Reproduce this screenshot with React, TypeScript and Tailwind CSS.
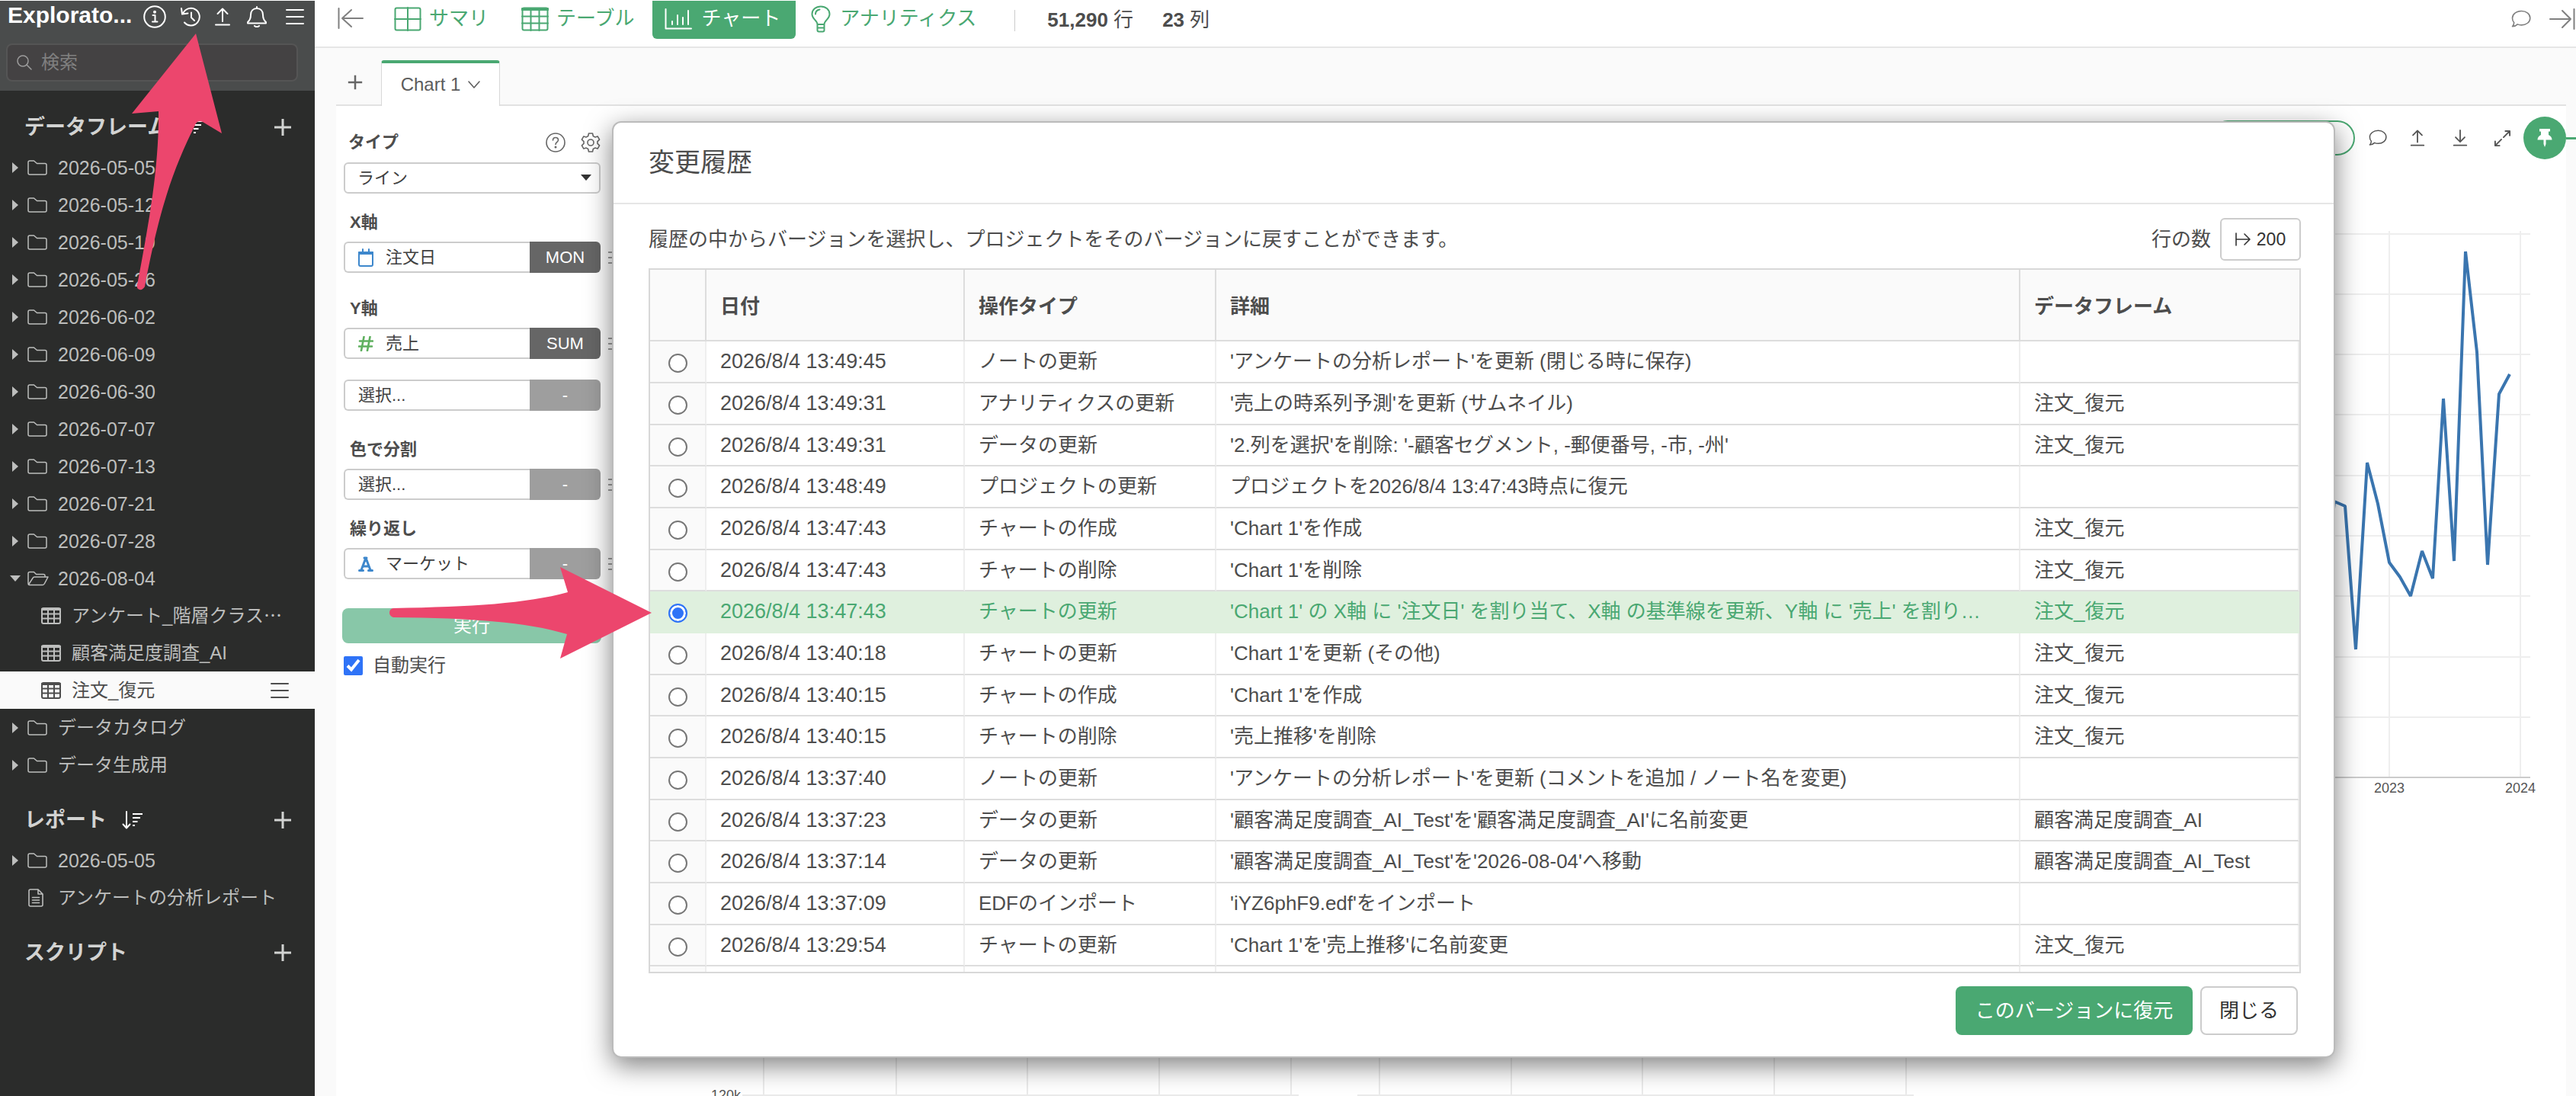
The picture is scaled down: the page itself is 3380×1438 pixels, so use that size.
import { useState, type ReactNode } from "react";

interface HistoryRow {
  date: string;
  type: string;
  detail: string;
  frame: string;
}

const history: HistoryRow[] = [
  { date: "2026/8/4 13:49:45", type: "ノートの更新", detail: "'アンケートの分析レポート'を更新 (閉じる時に保存)", frame: "" },
  { date: "2026/8/4 13:49:31", type: "アナリティクスの更新", detail: "'売上の時系列予測'を更新 (サムネイル)", frame: "注文_復元" },
  { date: "2026/8/4 13:49:31", type: "データの更新", detail: "'2.列を選択'を削除: '-顧客セグメント, -郵便番号, -市, -州'", frame: "注文_復元" },
  { date: "2026/8/4 13:48:49", type: "プロジェクトの更新", detail: "プロジェクトを2026/8/4 13:47:43時点に復元", frame: "" },
  { date: "2026/8/4 13:47:43", type: "チャートの作成", detail: "'Chart 1'を作成", frame: "注文_復元" },
  { date: "2026/8/4 13:47:43", type: "チャートの削除", detail: "'Chart 1'を削除", frame: "注文_復元" },
  { date: "2026/8/4 13:47:43", type: "チャートの更新", detail: "'Chart 1' の X軸 に '注文日' を割り当て、X軸 の基準線を更新、Y軸 に '売上' を割り…", frame: "注文_復元" },
  { date: "2026/8/4 13:40:18", type: "チャートの更新", detail: "'Chart 1'を更新 (その他)", frame: "注文_復元" },
  { date: "2026/8/4 13:40:15", type: "チャートの作成", detail: "'Chart 1'を作成", frame: "注文_復元" },
  { date: "2026/8/4 13:40:15", type: "チャートの削除", detail: "'売上推移'を削除", frame: "注文_復元" },
  { date: "2026/8/4 13:37:40", type: "ノートの更新", detail: "'アンケートの分析レポート'を更新 (コメントを追加 / ノート名を変更)", frame: "" },
  { date: "2026/8/4 13:37:23", type: "データの更新", detail: "'顧客満足度調査_AI_Test'を'顧客満足度調査_AI'に名前変更", frame: "顧客満足度調査_AI" },
  { date: "2026/8/4 13:37:14", type: "データの更新", detail: "'顧客満足度調査_AI_Test'を'2026-08-04'へ移動", frame: "顧客満足度調査_AI_Test" },
  { date: "2026/8/4 13:37:09", type: "EDFのインポート", detail: "'iYZ6phF9.edf'をインポート", frame: "" },
  { date: "2026/8/4 13:29:54", type: "チャートの更新", detail: "'Chart 1'を'売上推移'に名前変更", frame: "注文_復元" },
];

const folders = [
  "2026-05-05",
  "2026-05-12",
  "2026-05-19",
  "2026-05-26",
  "2026-06-02",
  "2026-06-09",
  "2026-06-30",
  "2026-07-07",
  "2026-07-13",
  "2026-07-21",
  "2026-07-28",
];

interface IconProps {
  className?: string;
  box?: string;
  width?: number;
  children: ReactNode;
}

function Icon({ className, box = "0 0 24 24", width = 2, children }: IconProps) {
  return (
    <svg
      className={className}
      viewBox={box}
      fill="none"
      stroke="currentColor"
      strokeWidth={width}
      strokeLinecap="round"
      strokeLinejoin="round"
      aria-hidden="true"
    >
      {children}
    </svg>
  );
}

function GridIcon({ className }: { className?: string }) {
  return (
    <Icon className={className} box="0 0 26 22">
      <rect x="1" y="1" width="24" height="20" rx="2" />
      <path d="M1 2.5h24" strokeWidth="3" />
      <path d="M1 8.5h24M1 14.5h24M9 2v19M17 2v19" />
    </Icon>
  );
}

function CommentIcon({ className }: { className?: string }) {
  return (
    <Icon className={className} box="0 0 26 24" width={1.6}>
      <path d="M13.5 1.5c6.4 0 11.3 4 11.3 9.2s-4.900 9.200-11.300 9.200c-1.900 0-3.700-.3-5.200-1-1.700 1.700-3.900 2.900-6.800 2.900 1.400-1.500 2.100-3.200 2.200-5.200C2 15 1.500 13 1.500 10.700c0-5.200 5.300-9.200 12-9.200z" />
    </Icon>
  );
}

function UploadIcon({ className, width }: { className?: string; width?: number }) {
  return (
    <Icon className={className} box="0 0 20 24" width={width}>
      <path d="M10 18V2M3.500 8 10 1.500 16.500 8M1 22.500h18" />
    </Icon>
  );
}

function MenuIcon({ className }: { className?: string }) {
  return (
    <Icon className={className} box="0 0 24 20">
      <path d="M1 1h22M1 10h22M1 19h22" />
    </Icon>
  );
}

function PlusIcon({ className }: { className?: string }) {
  return (
    <Icon className={className} width={3}>
      <path d="M12 1v22M1 12h22" strokeLinecap="butt" />
    </Icon>
  );
}

function SectionHead({ title, sortable }: { title: string; sortable?: boolean }) {
  return (
    <div className="flex h-[76px] items-center pt-5 pl-8 pr-[30px] text-[#d2d3d2]">
      <h2 className="text-[27px] leading-8 font-bold">{title}</h2>
      {sortable && (
        <button type="button" aria-label="並べ替え" className="ml-5 text-white">
          <Icon className="h-6 w-7" box="0 0 28 24">
            <path d="M6 1v21M1.500 17.500 6 22.500l4.500-5" />
            <path d="M14 4h13M14 9h10M14 14h6.500M14 19h3" strokeLinecap="butt" />
          </Icon>
        </button>
      )}
      <button type="button" aria-label={`${title}を追加`} className="ml-auto">
        <PlusIcon className="size-6" />
      </button>
    </div>
  );
}

function FolderRow({ name, open }: { name: string; open?: boolean }) {
  const dated = name.startsWith("20");
  return (
    <li className="flex h-[49px] items-center text-[#bdbebd]">
      <span className="flex w-9 shrink-0 justify-center pl-1">
        {open ? (
          <svg className="h-2 w-[14px]" viewBox="0 0 14 8" fill="currentColor" aria-hidden="true">
            <path d="M0 0h14L7 8z" />
          </svg>
        ) : (
          <svg className="h-[14px] w-2" viewBox="0 0 8 14" fill="currentColor" aria-hidden="true">
            <path d="M0 0v14l8-7z" />
          </svg>
        )}
      </span>
      <span className="w-10 shrink-0">
        {open ? (
          <Icon className="h-5 w-7" box="0 0 28 20" width={1.500}>
            <path d="M1 16V3.500Q1 1.500 3 1.500h5.500l3 3H21q2 0 2 2V8M1.500 18 7 9.500Q7.500 8 9.500 8H27l-4.500 8.500Q21.500 18.500 20 18.500H2.500Q1 18.500 1 16" />
          </Icon>
        ) : (
          <Icon className="h-5 w-[26px]" box="0 0 26 20" width={1.500}>
            <path d="M1 3q0-2 2-2h5.500l4 3.500H23q2 0 2 2V17q0 2-2 2H3q-2 0-2-2z" />
          </Icon>
        )}
      </span>
      <span className={dated ? "text-[25px] leading-8" : "text-[24px] leading-8"}>{name}</span>
    </li>
  );
}

function FrameRow({ name, active }: { name: string; active?: boolean }) {
  return (
    <li
      className={
        active
          ? "flex h-[49px] items-center bg-[#fafafa] pl-[54px] pr-[34px] text-[#4d4d4d]"
          : "flex h-[49px] items-center pl-[54px] pr-[34px] text-[#bdbebd]"
      }
    >
      <GridIcon className="mr-[14px] h-[22px] w-[26px] shrink-0" />
      <span className="text-[24px] leading-8 whitespace-nowrap">{name}</span>
      {active && (
        <button type="button" aria-label="メニュー" className="ml-auto">
          <MenuIcon className="h-5 w-6" />
        </button>
      )}
    </li>
  );
}

function Sidebar() {
  return (
    <aside className="flex w-[413px] shrink-0 flex-col bg-[#2b2c2b]">
      <div className="h-[118px] bg-[#4a4c4c]">
        <div className="flex h-[42px] items-center pl-2.5 text-white">
          <h1 className="w-[166px] pb-1 text-[30px] leading-9 font-bold">Explorato...</h1>
          <button type="button" aria-label="情報" className="ml-3">
            <Icon className="size-[30px]" box="0 0 30 30">
              <circle cx="15" cy="15" r="13.800" />
              <path d="M12.500 13h3v8M12 21.500h6.500" />
              <circle cx="15" cy="8.800" r="1" fill="currentColor" />
            </Icon>
          </button>
          <button type="button" aria-label="変更履歴" className="ml-[19px]">
            <Icon className="size-[26px]" box="0 0 26 26">
              <path d="M3 9A11.300 11.300 0 1 1 5 20.500M1 2l1 7.500 7.500-1M14 7.500V14l4 4" />
            </Icon>
          </button>
          <button type="button" aria-label="公開" className="ml-[19px]">
            <UploadIcon className="h-6 w-5" />
          </button>
          <button type="button" aria-label="通知" className="ml-[22px]">
            <Icon className="h-7 w-[26px]" box="0 0 26 28">
              <path d="M13 1v2M13 3c5 0 8 3.500 8 8.500 0 5 1.500 7.500 4 9.500v1.500H1V21c2.500-2 4-4.500 4-9.500C5 6.500 8 3 13 3zM10 26q3 2.500 6 0" />
            </Icon>
          </button>
          <button type="button" aria-label="メニュー" className="ml-[25px]">
            <MenuIcon className="h-5 w-6" />
          </button>
        </div>
        <label className="mt-[14px] ml-2 flex h-[50px] w-[383px] items-center gap-3 rounded-lg border-2 border-[#555555] bg-[#444243] px-3 text-[#9c9c9c]">
          <Icon className="size-5 shrink-0" box="0 0 20 20" width={1.500}>
            <circle cx="8" cy="8" r="7" />
            <path d="m13 13 6 6" />
          </Icon>
          <input
            type="search"
            aria-label="検索"
            placeholder="検索"
            className="min-w-0 flex-1 bg-transparent text-[24px] leading-8 outline-none placeholder:text-[#808080]"
          />
        </label>
      </div>

      <SectionHead title="データフレーム" sortable />
      <ul>
        {folders.map((name) => (
          <FolderRow key={name} name={name} />
        ))}
        <FolderRow name="2026-08-04" open />
        <FrameRow name="アンケート_階層クラス⋯" />
        <FrameRow name="顧客満足度調査_AI" />
        <FrameRow name="注文_復元" active />
        <FolderRow name="データカタログ" />
        <FolderRow name="データ生成用" />
      </ul>

      <SectionHead title="レポート" sortable />
      <ul>
        <FolderRow name="2026-05-05" />
        <li className="flex h-[49px] items-center pl-[37px] text-[24px] leading-8 text-[#bdbebd]">
          <Icon className="mr-[19px] h-6 w-5 shrink-0" box="0 0 20 24" width={1.600}>
            <path d="M1 3q0-2 2-2h10l6 6v14q0 2-2 2H3q-2 0-2-2zM13 1v6h6M5.500 11.500h9M5.500 15h9M5.500 18.500h9" />
          </Icon>
          アンケートの分析レポート
        </li>
      </ul>

      <SectionHead title="スクリプト" />
    </aside>
  );
}

function TopBar() {
  return (
    <header className="flex h-[62px] shrink-0 items-start border-b-2 border-[#e6e6e6] bg-white pl-[30px] text-[26px] leading-[46px] text-[#4aa872]">
      <button type="button" aria-label="サイドバーを閉じる" className="mt-[9px] text-[#808080]">
        <Icon className="h-7 w-[34px]" box="0 0 34 28">
          <path d="M1.500 1v26M33 14H6M18 3 6 14l12 11" />
        </Icon>
      </button>
      <nav className="flex items-start">
        <a href="#summary" className="ml-10 flex gap-2.5">
          <Icon className="mt-2 h-8 w-9" box="0 0 36 32">
            <rect x="1.500" y="1.500" width="33" height="29" rx="2" />
            <path d="M1 16h34M18 1v30" />
          </Icon>
          サマリ
        </a>
        <a href="#table" className="ml-[43px] flex gap-2.5">
          <Icon className="mt-2 h-8 w-9" box="0 0 36 32">
            <rect x="1.500" y="1.500" width="33" height="29" rx="2" />
            <path d="M1.500 3h33" strokeWidth="4" />
            <path d="M1 12.500h34M1 21.500h34M12.500 4v27M23.500 4v27" />
          </Icon>
          テーブル
        </a>
        <a href="#chart" className="ml-6 flex h-[50px] gap-3 rounded-b-md bg-[#4aa872] pr-5 pl-4 text-white">
          <Icon className="mt-2.5 h-7 w-9" box="0 0 36 28">
            <path d="M1.500 1v25.500H35M10 21v-4M17 21V9M24 21v-9M31 21V3" />
          </Icon>
          チャート
        </a>
        <a href="#analytics" className="ml-5 flex gap-3">
          <Icon className="mt-1.5 h-9 w-[26px]" box="0 0 26 36">
            <path d="M8.500 25C8.500 20 1.500 18 1.500 11.500 1.500 5.500 6.500 1.500 13 1.500s11.500 4 11.500 10c0 6.500-7 8.500-7 13.500zM8.500 29.500h9M8.500 25v7.500q0 2 2 2h5q2 0 2-2V25" />
            <path d="M6 11.500q0-5 5.500-6" />
          </Icon>
          アナリティクス
        </a>
      </nav>
      <div className="mt-3 ml-[50px] h-7 w-px bg-[#cccccc]" />
      <p className="ml-[42px] pt-0.5 text-[#4d4d4d]">
        <b>51,290</b> 行
      </p>
      <p className="ml-[38px] pt-0.5 text-[#4d4d4d]">
        <b>23</b> 列
      </p>
      <div className="ml-auto flex h-12 items-center gap-6 text-[#808080]">
        <button type="button" aria-label="コメント">
          <CommentIcon className="h-6 w-[26px]" />
        </button>
        <button type="button" aria-label="パネルを開く" className="mr-px">
          <Icon className="h-7 w-[34px]" box="0 0 34 28">
            <path d="M32.500 1v26M1 14h27M17 3l11 11-11 11" />
          </Icon>
        </button>
      </div>
    </header>
  );
}

function TabBar() {
  return (
    <div className="flex h-[76px] shrink-0 items-end bg-[#fafafa] pl-7">
      <div className="flex h-[60px] w-[59px] items-center justify-center border-b-2 border-[#e2e2e2] pr-2.5 text-[#666666]">
        <button type="button" aria-label="チャートを追加">
          <PlusIcon className="size-5" />
        </button>
      </div>
      <button
        type="button"
        className="flex h-[60px] w-[156px] items-center justify-center gap-2.5 rounded-t-sm border-x border-t-4 border-x-[#d8d8d8] border-t-[#4aa872] bg-white text-[24px] text-[#5c5c5c]"
      >
        Chart 1
        <Icon className="h-2.5 w-4" box="0 0 16 10" width={1.500}>
          <path d="m1 1 7 8 7-8" />
        </Icon>
      </button>
      <div className="mr-[13px] h-[60px] flex-1 border-b-2 border-[#e2e2e2]" />
    </div>
  );
}

interface FieldProps {
  label: string;
  value: string;
  icon?: ReactNode;
  unit: string;
  handle?: boolean;
}

function Field({ label, value, icon, unit, handle }: FieldProps) {
  return (
    <div className="flex items-center text-[22px] leading-7">
      <div className="flex h-[41px] w-[337px] shrink-0 text-[#404040]">
        <button
          type="button"
          aria-label={`${label} ${value}`}
          className="flex flex-1 items-center gap-4 rounded-l-md border-2 border-r-0 border-[#cccccc] bg-white pl-[17px]"
        >
          {icon}
          {value}
        </button>
        <button
          type="button"
          className={
            unit === "-"
              ? "w-[93px] rounded-r-md bg-[#9e9e9e] text-white"
              : "w-[93px] rounded-r-md bg-[#666666] text-white"
          }
        >
          {unit}
        </button>
      </div>
      {handle && (
        <Icon className="ml-2.5 h-4 w-5 shrink-0 text-[#808080]" box="0 0 20 16" width={1.500}>
          <path d="M0 1h20M0 8h20M0 15h20" />
        </Icon>
      )}
    </div>
  );
}

function Label({ children }: { children: ReactNode }) {
  return <h3 className="mb-[5px] pl-2 text-[22px] leading-10 font-bold text-[#4d4d4d]">{children}</h3>;
}

function Settings() {
  return (
    <section className="w-[373px] shrink-0 pt-7 pl-2.5">
      <div className="mb-1.5 flex h-10 w-[337px] items-center gap-5 pl-1.5 text-[#666666]">
        <label htmlFor="chart-type" className="mr-auto text-[22px] leading-10 font-bold text-[#4d4d4d]">
          タイプ
        </label>
        <button type="button" aria-label="ヘルプ">
          <Icon className="size-[26px]" box="0 0 26 26" width={1.600}>
            <circle cx="13" cy="13" r="12" />
            <path d="M9.500 10q0-3.500 3.500-3.500t3.500 3.300c0 2.500-3.500 2.700-3.500 5.700" />
            <circle cx="13" cy="19" r=".7" fill="currentColor" />
          </Icon>
        </button>
        <button type="button" aria-label="設定">
          <Icon className="size-[26px]" box="0 0 26 26" width={1.600}>
            <path d="M10.500 1h5l.8 3.500 2.400 1.400 3.400-1 2.500 4.300-2.600 2.400v2.800l2.600 2.400-2.500 4.300-3.400-1-2.400 1.400-.8 3.500h-5l-.8-3.500-2.400-1.400-3.400 1-2.500-4.300 2.600-2.400v-2.800L1.400 9.200l2.500-4.300 3.400 1 2.400-1.400z" />
            <circle cx="13" cy="13" r="4" />
          </Icon>
        </button>
      </div>
      <div className="relative w-[337px]">
        <select
          id="chart-type"
          className="h-[41px] w-full appearance-none rounded-md border-2 border-[#cccccc] bg-white pl-4 text-[22px] leading-7 text-[#404040]"
        >
          <option>ライン</option>
        </select>
        <svg
          className="pointer-events-none absolute top-4 right-3 h-2 w-[14px] text-[#333333]"
          viewBox="0 0 14 8"
          fill="currentColor"
          aria-hidden="true"
        >
          <path d="M0 0h14L7 8z" />
        </svg>
      </div>

      <div className="mt-[18px]">
        <Label>X軸</Label>
        <Field
          label="X軸"
          value="注文日"
          unit="MON"
          handle
          icon={
            <Icon className="h-6 w-5 text-[#3d87cc]" box="0 0 20 24">
              <path d="M1 6v15q0 2 2 2h14q2 0 2-2V6M6 1v4M14 1v4" />
              <path d="M1 6h18" strokeWidth="4" />
            </Icon>
          }
        />
      </div>

      <div className="mt-[27px]">
        <Label>Y軸</Label>
        <Field
          label="Y軸"
          value="売上"
          unit="SUM"
          handle
          icon={
            <Icon className="size-5 text-[#5fb05f]" box="0 0 20 20" width={2.600}>
              <path d="M7.500 1 4 19M15.500 1 12 19M2 6.500h17M1 13.500h17" />
            </Icon>
          }
        />
      </div>
      <div className="mt-[27px]">
        <Field label="Y軸" value="選択..." unit="-" />
      </div>

      <div className="mt-[31px]">
        <Label>色で分割</Label>
        <Field label="色で分割" value="選択..." unit="-" handle />
      </div>

      <div className="mt-[18px]">
        <Label>繰り返し</Label>
        <Field
          label="繰り返し"
          value="マーケット"
          unit="-"
          handle
          icon={
            <Icon className="size-5 text-[#3d87cc]" box="0 0 20 20" width={3}>
              <path d="M4 18 10 2l6 16M6 13h8M1.500 18.500h5M13.500 18.500h5M8 2h3" />
            </Icon>
          }
        />
      </div>

      <button type="button" className="mt-[38px] -ml-0.5 h-[46px] w-[340px] rounded-lg bg-[#88c7a8] text-[24px] leading-8 text-white">
        実行
      </button>
      <label className="mt-[13px] flex items-center gap-[13px] text-[24px] leading-8 text-[#4d4d4d]">
        <input type="checkbox" defaultChecked className="size-[25px] accent-[#2f73f7]" />
        自動実行
      </label>
    </section>
  );
}

function ChartToolbar() {
  return (
    <div className="flex h-[84px] items-center justify-end text-[#555555]">
      <button type="button" aria-label="サンプリング" className="mr-[18px] h-[46px] w-[190px] rounded-full border-2 border-[#4aa872]" />
      <button type="button" aria-label="コメント" className="mr-[30px]">
        <CommentIcon className="h-6 w-6" />
      </button>
      <button type="button" aria-label="アップロード" className="mr-9">
        <UploadIcon className="h-[22px] w-5" />
      </button>
      <button type="button" aria-label="ダウンロード" className="mr-[34px]">
        <Icon className="h-[22px] w-5" box="0 0 20 24">
          <path d="M10 1v16M3.500 11 10 17.500l6.500-6.500M1 22.500h18" />
        </Icon>
      </button>
      <button type="button" aria-label="拡大" className="mr-4">
        <Icon className="size-[23px]">
          <path d="M16 2h6v6M22 2l-8.500 8.500M2 16v6h6M2 22l8.500-8.500" />
        </Icon>
      </button>
      <button type="button" aria-label="ピン留め" className="flex size-14 items-center justify-center rounded-full bg-[#4aa872] text-white">
        <svg className="h-6 w-5" viewBox="0 0 20 24" fill="currentColor" aria-hidden="true">
          <path d="M3 0h14v3.500h-2V8c3 1.500 4.500 3.500 4.500 6.500h-8V20L10 24l-1.500-4v-5.500h-8C.5 11.500 2 9.500 5 8V3.500H3z" />
        </svg>
      </button>
      <div className="-mr-[13px] h-[3px] w-[13px] bg-[#4aa872]" />
    </div>
  );
}

const gridY = [7, 86, 165, 244, 324, 403, 482, 562, 641];

function LineChart() {
  return (
    <svg className="mt-[77px] mr-[27px] ml-auto h-[750px] w-[340px] shrink-0" viewBox="3000 0 340 750" role="img" aria-label="売上の推移">
      <g stroke="#eeeeee" strokeWidth="2">
        {gridY.map((y) => (
          <path key={y} d={`M3000 ${y}H3320`} />
        ))}
        <path d="M3135 3V720M3307 3V720" />
      </g>
      <path d="M3000 720H3320" stroke="#cccccc" strokeWidth="2" />
      <polyline
        fill="none"
        stroke="#3a75af"
        strokeWidth="4"
        strokeLinejoin="bevel"
        points="3048,500 3063,358 3077,364 3091,552 3106,307 3120,361 3135,438 3149,457 3163,482 3178,423 3192,459 3206,223 3220,436 3235,30 3250,162 3264,441 3279,217 3293,191"
      />
      <g fill="#555555" fontSize="18" textAnchor="middle">
        <text x="3135" y="740">2023</text>
        <text x="3307" y="740">2024</text>
      </g>
    </svg>
  );
}

function LowerCharts() {
  return (
    <div className="mt-[310px] flex gap-[70px] pl-[114px]">
      <svg className="h-[78px] w-[780px] shrink-0" viewBox="0 0 780 78" aria-hidden="true">
        <path d="M46 77H776M74 0v78M248 0v78M420 0v78M593 0v78M766 0v78" stroke="#ebebeb" strokeWidth="2" />
        <text x="44" y="83" fill="#555555" fontSize="18" textAnchor="end">
          120k
        </text>
      </svg>
      <svg className="h-[78px] w-[740px] shrink-0" viewBox="0 0 740 78" aria-hidden="true">
        <path d="M3 77H733M32 0v78M205 0v78M377 0v78M550 0v78M723 0v78" stroke="#ebebeb" strokeWidth="2" />
      </svg>
    </div>
  );
}

function HistoryDialog() {
  const [selected, setSelected] = useState(6);

  return (
    <div
      role="dialog"
      aria-labelledby="history-title"
      className="flex-1 self-start rounded-xl border-2 border-[#bbbbbb] bg-white bg-clip-padding text-[26px] text-[#4d4d4d] shadow-[0_10px_34px_rgba(0,0,0,0.5)]"
    >
      <h2 id="history-title" className="border-b-2 border-[#e6e6e6] pl-[46px] text-[34px] leading-[105px]">
        変更履歴
      </h2>
      <div className="pr-[43px] pl-[46px]">
        <div className="mt-[18px] flex h-14 items-center">
          <p className="mr-auto">履歴の中からバージョンを選択し、プロジェクトをそのバージョンに戻すことができます。</p>
          <span id="row-count">行の数</span>
          <button
            type="button"
            aria-labelledby="row-count"
            className="ml-3 flex h-14 w-[106px] items-center justify-center gap-2 rounded-md border-2 border-[#cccccc] text-[23px] text-[#333333]"
          >
            <Icon className="h-[18px] w-5" box="0 0 20 18" width={1.600}>
              <path d="M1 1v16M2 9h17M12 2l7 7-7 7" />
            </Icon>
            200
          </button>
        </div>

        <div className="mt-2.5 h-[925px] overflow-hidden border-2 border-[#d8d8d8]">
          <table className="w-full table-fixed border-separate border-spacing-0 text-left">
            <colgroup>
              <col className="w-[74px]" />
              <col className="w-[339px]" />
              <col className="w-[330px]" />
              <col />
              <col className="w-[366px]" />
            </colgroup>
            <thead>
              <tr className="h-[94px] bg-[#fafafa]">
                <th className="border-r-2 border-b-2 border-[#dddddd]" aria-label="選択" />
                <th className="border-r-2 border-b-2 border-[#dddddd] pt-1 pl-[18px]">日付</th>
                <th className="border-r-2 border-b-2 border-[#dddddd] pt-1 pl-[18px]">操作タイプ</th>
                <th className="border-r-2 border-b-2 border-[#dddddd] pt-1 pl-[18px]">詳細</th>
                <th className="border-b-2 border-[#dddddd] pt-1 pl-[18px]">データフレーム</th>
              </tr>
            </thead>
            <tbody>
              {history.map((row, i) => {
                const on = i === selected;
                const cell = on
                  ? "border-r-2 border-b-2 border-[#dff0de] pl-[18px] whitespace-nowrap"
                  : "border-r-2 border-b-2 border-r-[#eeeeee] border-b-[#dddddd] pl-[18px] whitespace-nowrap";
                return (
                  <tr
                    key={i}
                    className={
                      on
                        ? "h-[55px] bg-[#dff0de] text-[#4aa872] nth-[3n]:h-[54px]"
                        : "h-[55px] nth-[3n]:h-[54px]"
                    }
                  >
                    <td
                      className={
                        on
                          ? "border-r-2 border-b-2 border-[#dff0de]"
                          : "border-r-2 border-b-2 border-r-[#eeeeee] border-b-[#dddddd] bg-[#fafafa]"
                      }
                    >
                      <input
                        type="radio"
                        name="version"
                        aria-label={`${row.date} ${row.type}`}
                        checked={on}
                        onChange={() => setSelected(i)}
                        className="mx-auto mt-1 block size-[25px] appearance-none rounded-full border-2 border-[#767676] bg-white checked:border-[#2f73f7] checked:bg-[#2f73f7] checked:shadow-[inset_0_0_0_3px_white]"
                      />
                    </td>
                    <td className={`${cell} text-[27px]`}>{row.date}</td>
                    <td className={cell}>{row.type}</td>
                    <td className={cell}>{row.detail}</td>
                    <td className={cell}>{row.frame}</td>
                  </tr>
                );
              })}
              <tr className="h-[54px]">
                <td className="border-r-2 border-[#eeeeee] bg-[#fafafa]" />
                <td className="border-r-2 border-[#eeeeee]" />
                <td className="border-r-2 border-[#eeeeee]" />
                <td className="border-r-2 border-[#eeeeee]" />
                <td />
              </tr>
            </tbody>
          </table>
        </div>

        <div className="flex justify-end gap-2.5 pt-[17px] pr-1 pb-7">
          <button type="button" className="h-16 w-[311px] rounded-lg bg-[#4aa872] text-white">
            このバージョンに復元
          </button>
          <button type="button" className="h-16 w-[128px] rounded-lg border-2 border-[#cccccc] text-[#333333]">
            閉じる
          </button>
        </div>
      </div>
    </div>
  );
}

export default function App() {
  return (
    <div className="relative flex h-screen overflow-hidden bg-white pt-px font-['Liberation_Sans','Noto_Sans_CJK_JP',sans-serif]">
      <Sidebar />
      <div className="flex min-w-0 flex-1 flex-col bg-[#fafafa]">
        <TopBar />
        <TabBar />
        <main className="mr-[13px] ml-7 flex min-h-0 flex-1 bg-white">
          <Settings />
          <section className="flex min-w-0 flex-1 flex-col">
            <ChartToolbar />
            <LineChart />
            <LowerCharts />
          </section>
        </main>
      </div>

      <div className="absolute inset-0 flex pt-[159px] pr-[316px] pl-[803px]">
        <HistoryDialog />
      </div>

      {/* callout arrows over the history button and the selected version */}
      <svg className="pointer-events-none absolute top-0 left-0 h-[880px] w-[870px]" viewBox="0 0 870 880" fill="#ec466d" aria-hidden="true">
        <path d="M257 44 291 175 266 160Q260 157 257 162C228 220 210 270 190 376Q187 381 183 380 179 379 180 374C194 300 209 220 208 146L173 149z" />
        <path d="M855 804 735 744 745 777C690 792 620 796 516 798Q511 799 511 804 511 808 516 810C620 811 690 816 744 832L735 864z" />
      </svg>
    </div>
  );
}
